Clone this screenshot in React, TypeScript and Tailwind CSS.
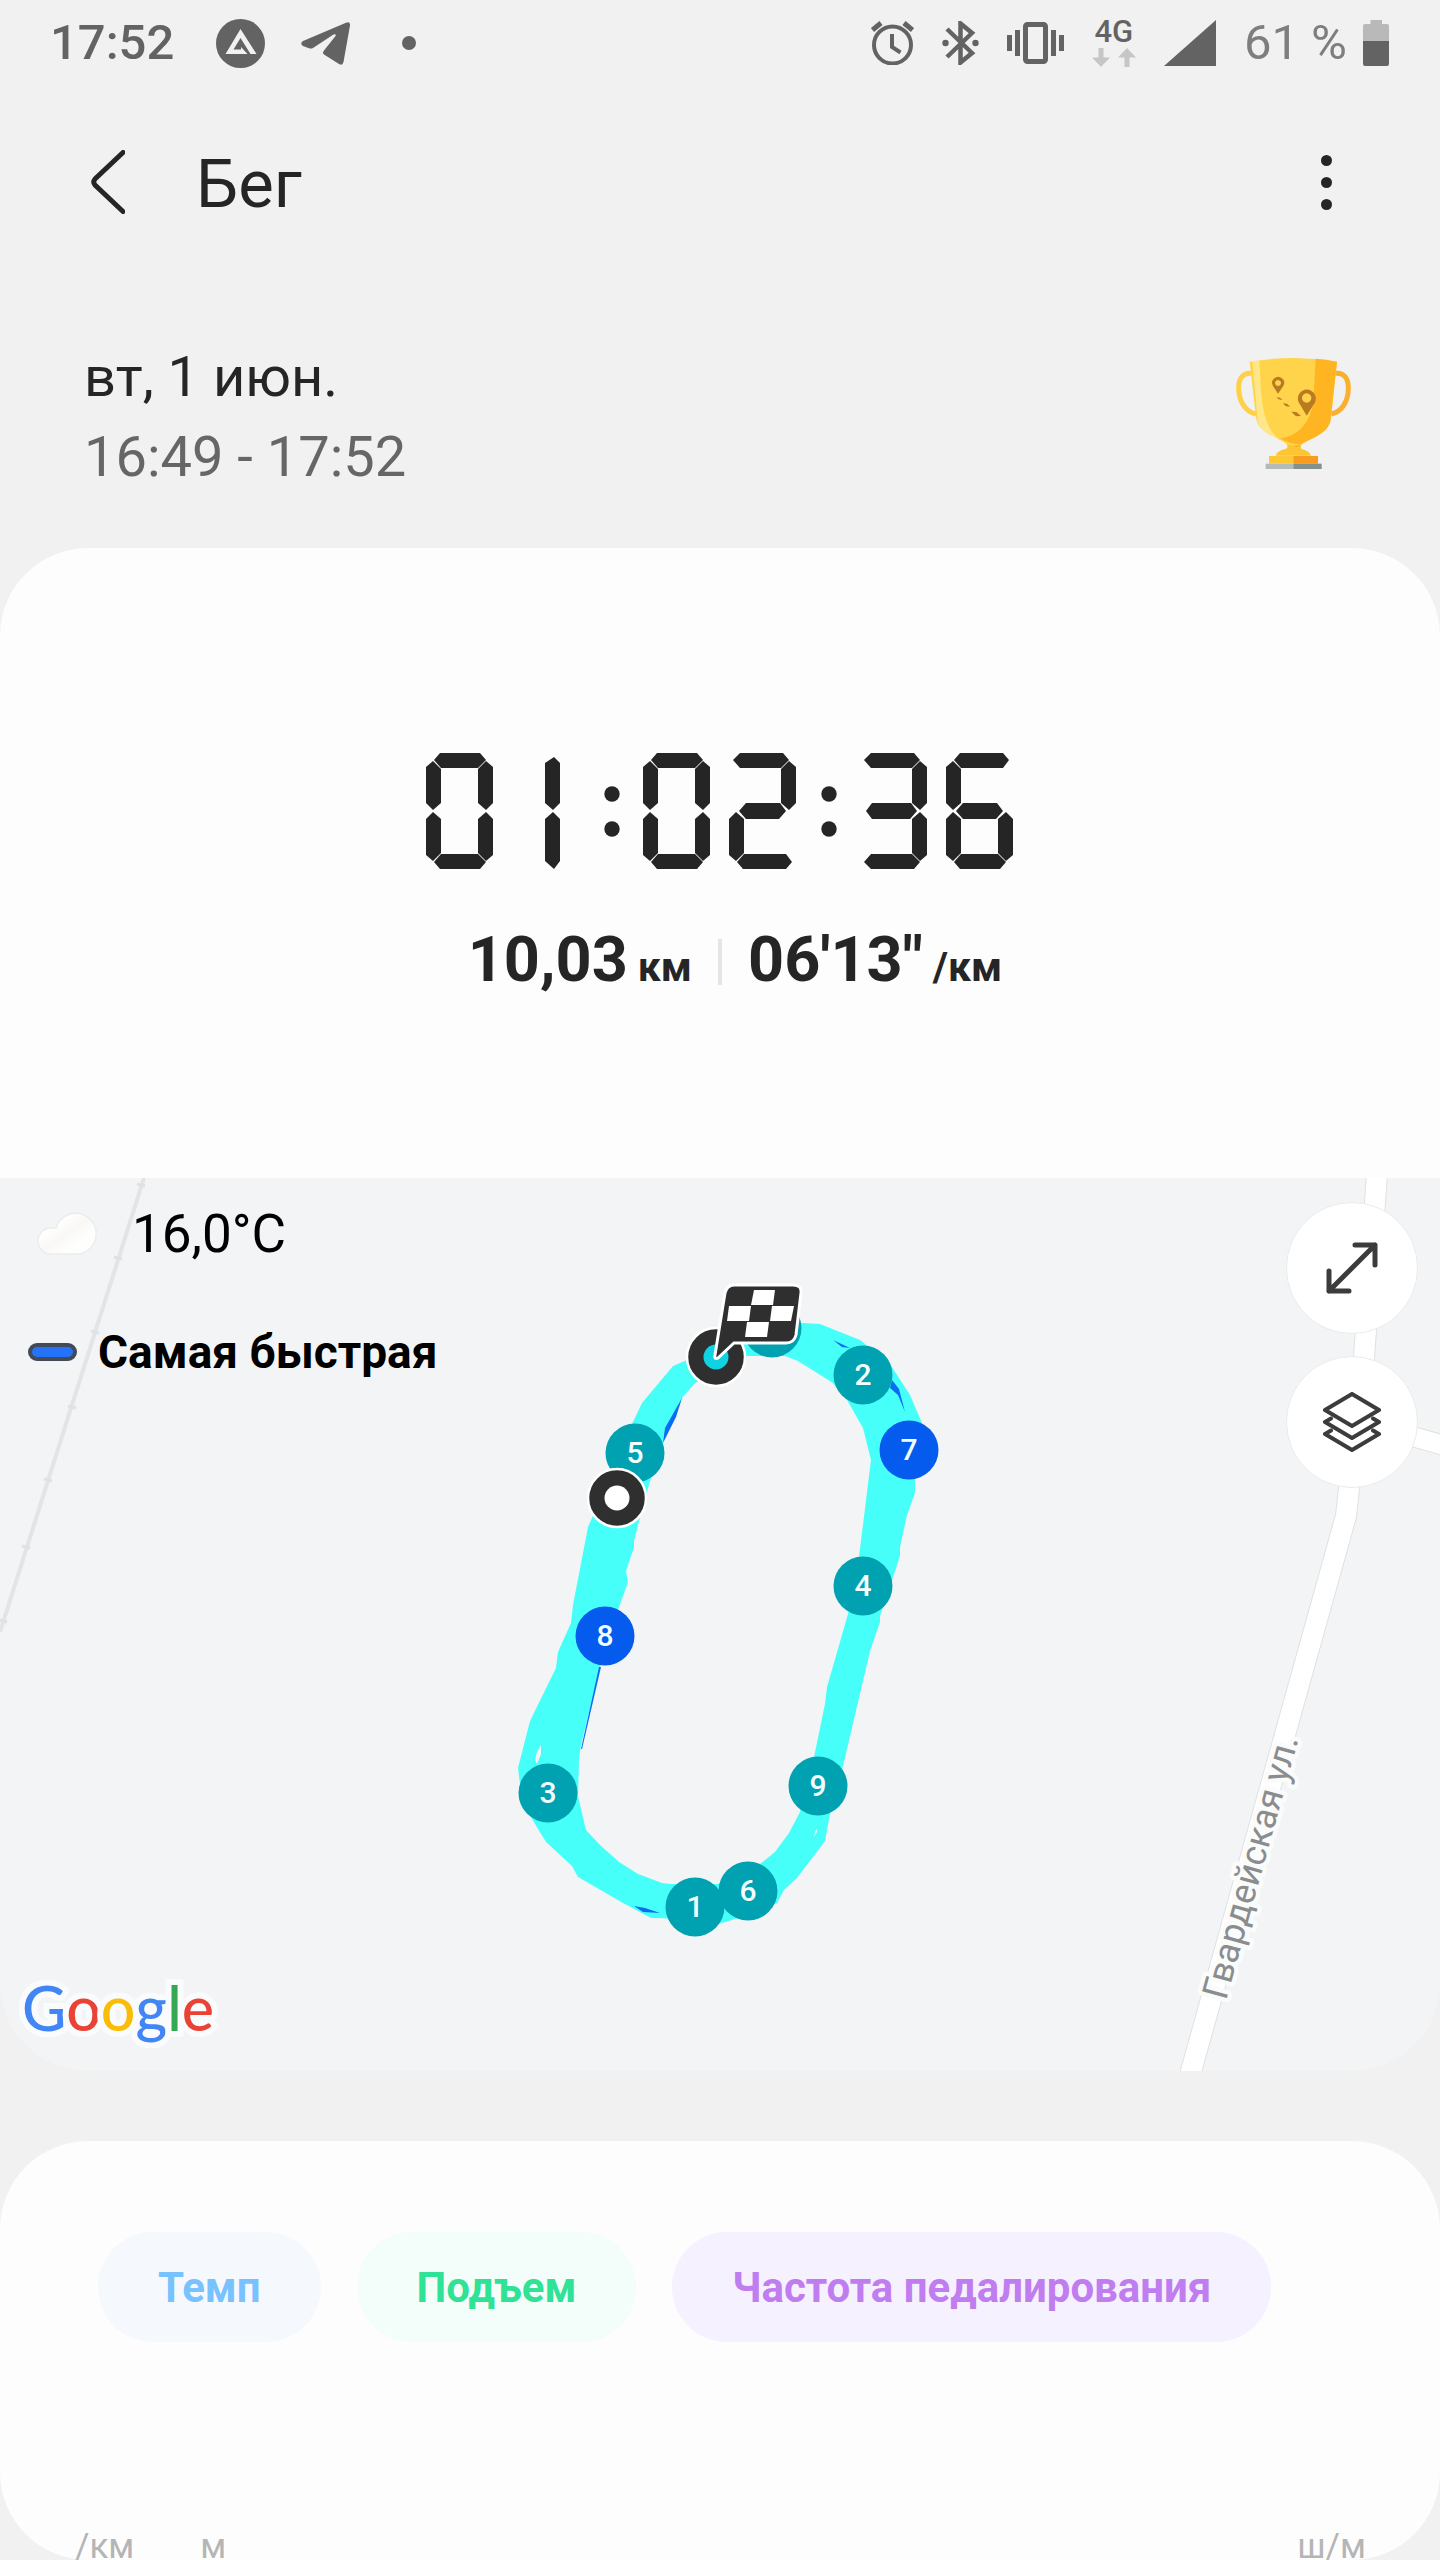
import React from "react";

type Point = [number, number];

// upper case keys are the longer bars of a digit whose neighbour is unlit
const SEGMENTS: Record<string, string> = {
  a: "8,7 14,0 54,0 60,7 52,15 15,15",
  b: "60,8 67,14 67,50 60,57 52,50 52,16",
  c: "60,108 67,102 67,66 60,59 52,66 52,100",
  d: "8,109 14,116 54,116 60,109 52,101 15,101",
  e: "7,108 0,102 0,66 7,59 15,66 15,100",
  f: "7,8 0,14 0,50 7,57 15,50 15,16",
  g: "10,58 17,50 51,50 57,58 50,66 17,66",
  A: "4,7 11,0 54,0 60,7 52,15 11,15",
  B: "8,7 14,0 57,0 63,7 57,15 15,15",
  D: "4,109 11,116 54,116 60,109 52,101 11,101",
  E: "8,109 14,116 57,116 63,109 57,101 15,101",
  G: "6,58 12,50 51,50 57,58 50,66 12,66",
  I: "61,4 67,10 67,50 60,57 52,50 52,10",
  J: "61,116 67,108 67,66 60,59 52,66 52,108",
};

const LIT: Record<string, string> = {
  "0": "abcdef",
  "1": "IJ",
  "2": "AbgeE",
  "3": "AbGcD",
  "4": "fgbc",
  "5": "BfgcD",
  "6": "Bfgedc",
  "7": "Abc",
  "8": "abcdefg",
  "9": "abcDfg",
};

// left edge of every cell of the readout
const CELLS = [0, 67, 178, 217, 303, 395, 434, 520];

const Stopwatch = ({ value }: { value: string }) => {
  return (
    <svg
      role="img"
      aria-label={value}
      viewBox="0 0 588 116"
      className="w-[588px] h-[116px] fill-[#252525]"
    >
      {value.split("").map((char, i) => (
        <g key={i} transform={`translate(${CELLS[i]} 0)`}>
          {char === ":" ? (
            <>
              <circle cx="8" cy="41" r="7.7" />
              <circle cx="8" cy="76" r="7.7" />
            </>
          ) : (
            LIT[char].split("").map((s) => <polygon key={s} points={SEGMENTS[s]} />)
          )}
        </g>
      ))}
    </svg>
  );
};

const StatusBar = () => {
  return (
    <div className="h-[86px] pl-[50px] pr-[51px] flex items-center justify-between text-[49px] text-[#636363]">
      <div className="flex items-center gap-9">
        <p className="mr-1.5 font-medium">17:52</p>
        <svg viewBox="0 0 49 49" className="w-[49px] h-[49px]">
          <circle cx="24.5" cy="24.5" r="24.5" fill="#636363" />
          <path d="M24.5 10 L40.5 35 H34.5 L24.5 19 L17.5 30.5 H25 V28 L31.5 35 H9.5 Z" fill="#f1f1f1" />
        </svg>
        <svg viewBox="0 0 49 43" className="w-[49px] h-[43px] fill-[#636363]">
          <path d="M2 19 L45 .8 Q49.400 -.8 49 3.500 L42.500 40 Q41.500 44 38 42 L23 32.500 Q21 31 23 28.500 L34.500 14 Q35.500 11.500 32.500 12.500 L12 26 Q10 27 8 26.200 L2 24 Q-1.500 21.500 2 19 Z" />
        </svg>
        <span className="ml-4 size-3.5 rounded-full bg-[#636363]" />
      </div>
      <div className="flex items-center gap-7">
        <svg viewBox="0 0 43 44" className="w-[43px] h-[44px] fill-none stroke-[#636363]" strokeWidth="4">
          <circle cx="21.500" cy="24" r="18.500" />
          <path d="M1.500 9 L10 2 M33 2 L41.500 9" strokeWidth="5" />
          <path d="M21 13 V26 L29.500 31.500" />
        </svg>
        <svg viewBox="0 0 37 44" className="w-[37px] h-[44px] fill-none stroke-[#636363]" strokeWidth="4.500">
          <path d="M5 8 L30 32 L18.500 41.500 V2.500 L30 12 L5 36" />
          <circle cx="3.500" cy="22" r="3.200" fill="#636363" stroke="none" />
          <circle cx="33.500" cy="22" r="3.200" fill="#636363" stroke="none" />
        </svg>
        <svg viewBox="0 0 57 42" className="w-[57px] h-[42px] fill-[#636363]">
          <path d="M0 13h5v16H0zM8 8h5v26H8zM44 8h5v26h-5zM52 13h5v16h-5z" />
          <rect x="18.500" y="2.500" width="20" height="37" rx="2" fill="none" stroke="#636363" strokeWidth="5" />
        </svg>
        <div className="flex flex-col items-center gap-1">
          <p className="text-[31px] leading-6 font-medium">4G</p>
          <svg viewBox="0 0 44 19" className="w-[44px] h-[19px] fill-[#c6c6c6]">
            <path d="M6.500 0h5v9.500H18L9 19 0 9.500h6.500zM32.500 19h5V9.500H44L35 0 26 9.500h6.500z" />
          </svg>
        </div>
        <svg viewBox="0 0 52 46" className="w-[52px] h-[46px] fill-[#636363]">
          <path d="M52 0V46H0z" />
        </svg>
        <div className="flex items-center gap-4">
          <p className="text-[#7e7e7e]">61 %</p>
          <svg viewBox="0 0 26 46" className="w-[26px] h-[46px]">
            <path d="M7.500 0h11.500v4H24q2 0 2 2V21H0V6q0-2 2-2h5.500z" fill="#b9b9b9" />
            <path d="M0 21H26V44q0 2-2 2H2q-2 0-2-2z" fill="#636363" />
          </svg>
        </div>
      </div>
    </div>
  );
};

const Trophy = () => {
  return (
    <svg viewBox="168 115 345 333" className="w-[115px] h-[111px]">
      <g fill="none" strokeWidth="15">
        <path d="M214 161 C187 158 176 178 176 205 C176 245 196 276 228 283" stroke="#ffcf45" />
        <path d="M467 161 C494 158 505 178 505 205 C505 245 486 276 454 283" stroke="#fbb02c" />
      </g>
      <path d="M318 366 Q345 374 368 366 Q360 380 364 388 Q388 393 393 408 H287 Q292 393 316 388 Q328 384 318 366z" fill="#fdc533" />
      <path d="M330 372 H364 Q356 380 350 382 Q342 380 330 372z" fill="#f7a91f" />
      <path d="M209 126 Q340 104 471 126 L452 300 C446 340 400 352 364 374 Q342 382 320 374 C296 352 232 340 228 292z" fill="#ffd44a" />
      <path d="M407 117 Q440 119 471 126 L452 300 C446 340 400 352 364 374 Q330 374 300 356 C360 350 398 300 401 230z" fill="#ffb522" />
      <path d="M217 125 L238 122 C243 200 240 320 298 358 C262 345 232 330 232 290z" fill="#ffe789" />
      <path d="M267 409H340V432H267z" fill="#fdc736" />
      <path d="M340 409H414V432H340z" fill="#f89b1e" />
      <path d="M257 432H340V448H257z" fill="#b4bcb9" />
      <path d="M340 432H425V448H340z" fill="#84918c" />
      <g fill="#b97a22">
        <path fillRule="evenodd" d="M294 222 L279 199 A18 18 0 1 1 310 199z M294 181a9 9 0 1 0 .1 0z" />
        <path fillRule="evenodd" d="M380 288 L356 248 A27 27 0 1 1 405 248z M380 221a14 14 0 1 0 .1 0z" />
        <path d="M289 233 L300 234 L308 241 L296 239zM308 251 L321 252 L331 261 L318 260zM334 276 L349 277 L363 289 L348 290z" />
      </g>
    </svg>
  );
};

const ROUTE_OUTER: Point[] = [
  [802, 145], [820, 146], [860, 162], [890, 186], [910, 217], [928, 259], [915, 301], [915, 315],
  [907, 337], [900, 369], [900, 378], [893, 399], [880, 438], [880, 444], [870, 473], [843, 588],
  [830, 636], [825, 663], [797, 700], [784, 712], [777, 725], [747, 737], [722, 745], [697, 741],
  [651, 740], [623, 725], [578, 699], [572, 688], [546, 664], [532, 641], [520, 606], [518, 590],
  [530, 543], [556, 490], [558, 474], [571, 445], [573, 427], [588, 349], [592, 340], [613, 292],
  [632, 246], [642, 225], [673, 188], [687, 182], [713, 154], [747, 145],
];

const ROUTE_INNER: Point[] = [
  [747, 178], [785, 178], [798, 183], [833, 205], [847, 222], [863, 250], [871, 282], [859, 379],
  [848, 436], [827, 509], [825, 526], [814, 579], [800, 634], [789, 655], [775, 674], [760, 686],
  [718, 706], [670, 706], [662, 705], [638, 696], [619, 684], [600, 667], [586, 652], [578, 618],
  [579, 581], [581, 567], [600, 489], [618, 432], [628, 404], [626, 393], [634, 369], [634, 363],
  [638, 347], [650, 303], [663, 264], [682, 220], [695, 205],
];

const toPath = (points: Point[]) => `M${points.map((p) => p.join(" ")).join("L")}Z`;

const MARKERS = [
  { label: "6", x: 748, y: 713 },
  { label: "1", x: 695, y: 729 },
  { label: "2", x: 863, y: 197 },
  { label: "3", x: 548, y: 615 },
  { label: "4", x: 863, y: 408 },
  { label: "5", x: 635, y: 275 },
  { label: "7", x: 909, y: 272, fast: true },
  { label: "8", x: 605, y: 458, fast: true },
  { label: "9", x: 818, y: 608 },
];

const RAIL_TIES: Point[] = [[141, 7], [118, 80], [95, 154], [72, 229], [48, 302], [26, 369], [3, 443]];

const ROAD = "M1377 -4 L1364 180 L1349 311 L1346 338 L1188 904";
const SIDE_ROAD = "M1350 245 L1418 260 L1446 268";

const RouteMap = () => {
  return (
    <svg viewBox="0 0 1440 893" className="block w-full h-auto">
      <path d="M144 0 L0 454" stroke="#e2e4e5" strokeWidth="4" fill="none" />
      {RAIL_TIES.map(([x, y]) => (
        <path key={y} d={`M${x - 4} ${y - 1}L${x + 4} ${y + 1}`} stroke="#dfe1e3" strokeWidth="3" />
      ))}
      <g fill="none">
        <path d={SIDE_ROAD} stroke="#dfe1e2" strokeWidth="21" />
        <path d={ROAD} stroke="#dfe1e2" strokeWidth="22" />
        <path d={SIDE_ROAD} stroke="#fff" strokeWidth="19" />
        <path d={ROAD} stroke="#fff" strokeWidth="20" />
      </g>
      <text
        transform="translate(1226 823) rotate(-74.5)"
        fontSize="36"
        fill="#8a8c8e"
        stroke="#fafbfb"
        strokeWidth="9"
        strokeLinejoin="round"
        paintOrder="stroke"
      >
        Гвардейская ул.
      </text>

      <path d={toPath(ROUTE_OUTER) + toPath(ROUTE_INNER)} fillRule="evenodd" fill="#47fff9" />
      <g fill="#0a6cf5">
        <path d="M665 250L682 220L676 239L663 265Z" />
        <path d="M833 162L850 170L842 169Z" />
        <path d="M892 202L899 211L905 234L898 217L890 210Z" />
        <path d="M634 728L645 730L660 735L643 734Z" />
        <path d="M599 489L601 489L582 571L581 571Z" />
      </g>
      <path d="M541 567L541 576L537 586L535 582L537 574ZM817 651L817 654L814 659L815 654Z" fill="#f2f4f5" />

      <circle cx="772" cy="150" r="29.500" fill="#00a2b1" />
      {MARKERS.map((m) => (
        <g key={m.label}>
          <circle cx={m.x} cy={m.y} r="29.500" fill={m.fast ? "#045bee" : "#00a2b1"} />
          <text x={m.x} y={m.y + 10} textAnchor="middle" fontSize="30" fontWeight="500" fill="#f2feff">
            {m.label}
          </text>
        </g>
      ))}

      {/* start */}
      <circle cx="617" cy="320" r="29" fill="#2f2f2f" stroke="#fff" strokeWidth="2.500" />
      <circle cx="617" cy="320" r="12.500" fill="#fff" />
      {/* finish */}
      <circle cx="716" cy="179" r="29" fill="#2f2f2f" stroke="#fff" strokeWidth="2.500" />
      <circle cx="716" cy="179" r="12.500" fill="#10d2e2" />
      <path
        d="M734 107H793Q802 107 801 115L796 157Q794 165 786 165H734L718 180Q714 182 715 177L725 115Q727 107 734 107Z"
        fill="#2f2f2f"
        stroke="#fff"
        strokeWidth="3"
      />
      <path
        d="M754 112H775L773 127H751ZM729 128H751L749 143H727ZM772 128H794L791 143H770ZM747 144H769L767 159H745Z"
        fill="#fff"
      />
    </svg>
  );
};

const MapButton = ({ label, children }: { label: string; children: React.ReactNode }) => {
  return (
    <button
      aria-label={label}
      className="size-[132px] rounded-full bg-white border border-[#e9ebec] flex justify-center items-center"
    >
      {children}
    </button>
  );
};

const GoogleLogo = () => {
  return (
    <p className="text-[61px] leading-[72px] font-medium font-[Lato,sans-serif] [paint-order:stroke] [-webkit-text-stroke:12px_#fafbfc]">
      <span className="text-[#4285f4]">G</span>
      <span className="text-[#ea4335]">o</span>
      <span className="text-[#fbbc05]">o</span>
      <span className="text-[#4285f4]">g</span>
      <span className="text-[#34a853]">l</span>
      <span className="text-[#ea4335]">e</span>
    </p>
  );
};

const CHIPS = [
  { name: "Темп", style: "bg-[#f5f9fd] text-[#77c2ff]" },
  { name: "Подъем", style: "bg-[#f3fdfa] text-[#2fe296]" },
  { name: "Частота педалирования", style: "bg-[#f5f1fe] text-[#c07df0]" },
];

const App = () => {
  return (
    <main className="bg-[#f1f1f1] text-[#252525] overflow-hidden font-[Roboto,sans-serif]">
      <StatusBar />

      <header className="h-[196px] pl-[91px] pr-[108px] flex items-center justify-between">
        <div className="flex items-center gap-[71px]">
          <button aria-label="Назад" className="pb-1">
            <svg viewBox="0 0 34 64" className="w-[34px] h-[64px] fill-none stroke-[#252525]">
              <path d="M32 2.500 L4 29 Q1.500 32 4 35 L32 61.500" strokeWidth="5" strokeLinecap="round" />
            </svg>
          </button>
          <h1 className="text-[67px] leading-[80px]">Бег</h1>
        </div>
        <button aria-label="Ещё" className="flex flex-col gap-[11px] pb-1">
          <span className="size-[11px] rounded-full bg-[#252525]" />
          <span className="size-[11px] rounded-full bg-[#252525]" />
          <span className="size-[11px] rounded-full bg-[#252525]" />
        </button>
      </header>

      <section className="pt-[55px] pb-[51px] pl-[84px] pr-[89px] flex items-start justify-between text-[56px] leading-[80px]">
        <div>
          <p>вт, 1 июн.</p>
          <p className="text-[#666666]">16:49 - 17:52</p>
        </div>
        <div className="pt-[21px]">
          <Trophy />
        </div>
      </section>

      <section className="rounded-t-[88px] bg-[#fdfdfd] pt-[205px] pb-[186px] flex flex-col items-center gap-[59px]">
        <Stopwatch value="01:02:36" />
        <div className="w-full h-16 grid grid-cols-[1fr_auto_1fr] items-center gap-[26px] text-[63px] leading-[64px] font-bold">
          <p className="flex items-baseline justify-end gap-2.5">
            10,03 <span className="text-[41px]">км</span>
          </p>
          <span className="w-1 h-[46px] mb-1 bg-[#e5e5e5]" />
          <p className="flex items-baseline gap-2.5">
            06'13" <span className="text-[41px]">/км</span>
          </p>
        </div>
      </section>

      <section className="relative bg-[#f2f4f5] rounded-b-[88px] overflow-hidden">
        <RouteMap />
        <div className="absolute top-6 left-7 flex flex-col gap-[58px] text-black">
          <div className="flex items-center gap-[34px] pl-2">
            <svg viewBox="0 0 62 44" className="w-[62px] h-[44px]">
              <defs>
                <linearGradient id="cloud" x1="0" y1="0" x2="1" y2="1">
                  <stop offset="0.3" stopColor="#fefefd" />
                  <stop offset="0.5" stopColor="#f9f8f5" />
                  <stop offset="0.7" stopColor="#fefefd" />
                </linearGradient>
              </defs>
              <path
                d="M15 42 A13 13 0 0 1 15 16 Q18 16 20 16 A20.500 20.500 0 1 1 43 42 Z"
                fill="url(#cloud)"
                stroke="#ebecec"
                strokeWidth="1.500"
              />
            </svg>
            <p className="text-[53px] leading-[64px]">16,0°C</p>
          </div>
          <div className="flex items-center gap-[21px]">
            <span className="w-[49px] h-[18px] rounded-full border-4 border-[#424a58] bg-[#2472f7]" />
            <p className="text-[46px] leading-[56px] font-bold">Самая быстрая</p>
          </div>
        </div>
        <div className="absolute top-6 right-[22px] flex flex-col gap-[22px]">
          <MapButton label="Развернуть карту">
            <svg viewBox="0 0 52 52" className="w-[52px] h-[52px] fill-none stroke-[#3c3c3c]">
              <path
                d="M3 49 L49 3 M29 3 H49 V23 M3 29 V49 H23"
                strokeWidth="5"
                strokeLinecap="round"
                strokeLinejoin="round"
              />
            </svg>
          </MapButton>
          <MapButton label="Слои карты">
            <svg viewBox="0 0 58 60" className="w-[58px] h-[60px] fill-none stroke-[#3c3c3c]">
              <path
                d="M29 2 L56 18 L29 34 L2 18 Z M8 26.500 L2 30 L29 46 L56 30 L50 26.500 M8 38.500 L2 42 L29 58 L56 42 L50 38.500"
                strokeWidth="4"
                strokeLinecap="round"
                strokeLinejoin="round"
              />
            </svg>
          </MapButton>
        </div>
        <div className="absolute left-[22px] bottom-[27px]">
          <GoogleLogo />
        </div>
      </section>

      <section className="mt-[70px] rounded-[88px] bg-[#fdfdfd] pt-[91px]">
        <div className="pl-[98px] flex gap-9">
          {CHIPS.map((chip) => (
            <button
              key={chip.name}
              className={`h-[110px] px-[60px] rounded-full text-[42px] font-bold whitespace-nowrap ${chip.style}`}
            >
              {chip.name}
            </button>
          ))}
        </div>
        <div className="h-[218px] pl-[75px] pr-[74px] flex items-end justify-between text-[35px] leading-[26px] text-[#b5b5b5]">
          <div className="flex gap-[66px]">
            <p>/км</p>
            <p>м</p>
          </div>
          <p>ш/м</p>
        </div>
      </section>
    </main>
  );
};

export default App;
